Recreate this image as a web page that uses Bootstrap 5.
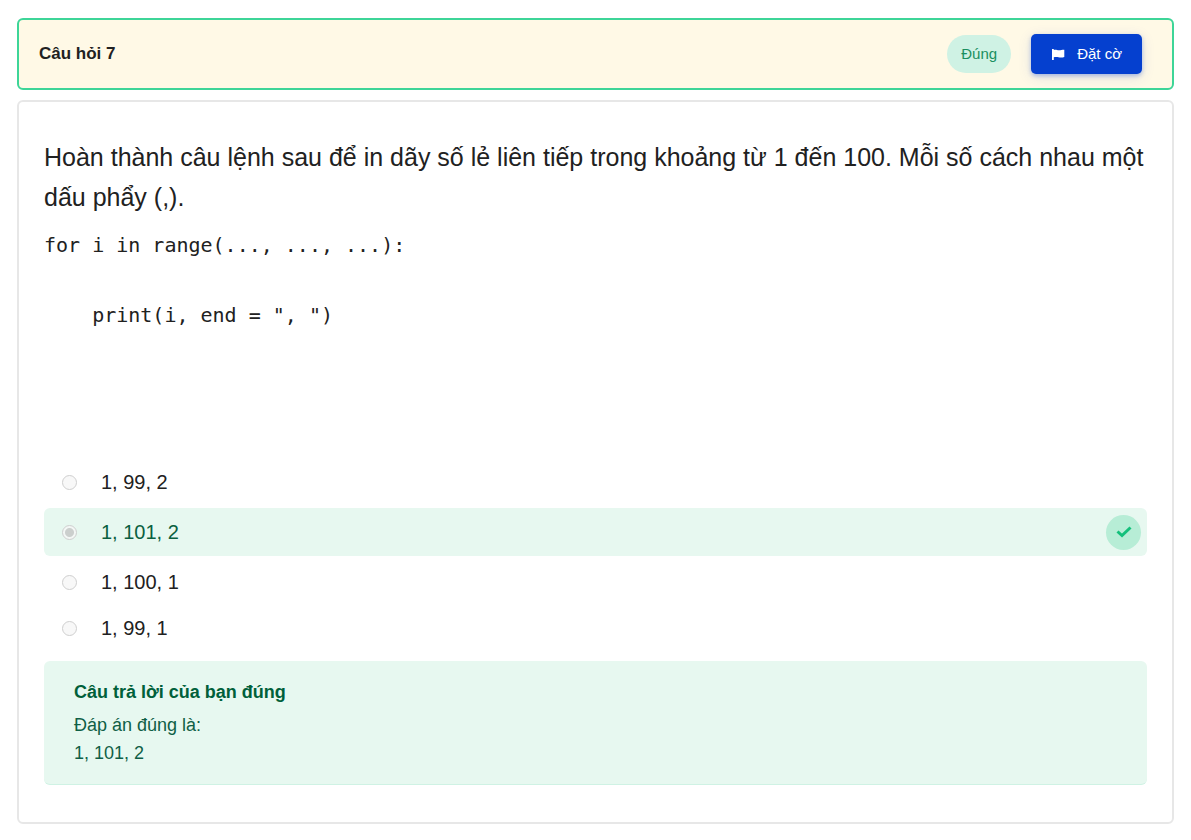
<!DOCTYPE html>
<html lang="vi">
<head>
<meta charset="utf-8">
<meta name="viewport" content="width=device-width, initial-scale=1">
<title>Câu hỏi 7</title>
<link rel="stylesheet" href="https://cdn.jsdelivr.net/npm/bootstrap@5.3.0/dist/css/bootstrap.min.css">
<style>
  body { font-family: "Liberation Sans", Arial, sans-serif; color: #212121; background: #fff; }
  .quiz { padding: 18px 17px 16px; gap: 10px; }
  .question-bar { min-height: 72px; padding: 0 30px 0 20px; border: 2px solid #3dd598; border-radius: 6px; background: #fff9e6; }
  .question-title { font-size: 17px; line-height: 24px; }
  .bar-actions { gap: 20px; }
  .status-pill { padding: 7px 14px; font-size: 15px; line-height: 24px; color: #1a8f5f; background: #cff2e4; }
  .btn-flag { --bs-btn-color: #fff; --bs-btn-bg: #0540cf; --bs-btn-hover-color: #fff; --bs-btn-hover-bg: #0436b0; --bs-btn-border-radius: 5px; height: 40px; padding: 0 20px; border: 0; font-size: 15px; line-height: 24px; gap: 12px; box-shadow: 0 2px 4px rgba(5, 64, 207, .3), 0 3px 14px rgba(5, 64, 207, .12); }
  .question-body { padding: 35px 25px 37px; border: 2px solid #e7e7e7; border-radius: 6px; }
  .question-text { font-size: 25px; line-height: 40px; }
  .code-sample { margin: 11px 0 126px; font-family: "DejaVu Sans Mono", monospace; font-size: 20px; line-height: 35px; color: #212121; }
  .option { min-height: 46px; padding: 0 6px 0 18px; font-size: 20px; line-height: 30px; border-radius: 6px; }
  .option-correct { min-height: 48px; margin: 3px 0; color: #0a6040; background: #e7f8f0; }
  .option label { padding-left: 24px; }
  .option input { appearance: none; width: 15px; height: 15px; margin: 0; border: 1px solid #cfcfcf; border-radius: 50%; background: #f8f8f8; }
  .option input:checked { background: radial-gradient(circle, #cbcfcd 4px, #f3f7f5 5px); }
  .check-badge { width: 35px; height: 35px; background: #b7edd6; }
  .feedback { margin-top: 10px; padding: 17px 30px; border-bottom: 1px solid #cff2e4; border-radius: 6px; background: #e7f8f0; color: #0f5f46; font-size: 18px; line-height: 28px; }
  .feedback h2 { margin-bottom: 5px; font-size: 18px; line-height: 28px; color: #00603a; }
</style>
</head>
<body>
<main class="quiz d-flex flex-column">
  <header class="question-bar d-flex align-items-center justify-content-between">
    <h1 class="question-title fw-bold mb-0">Câu hỏi 7</h1>
    <div class="bar-actions d-flex align-items-center">
      <span class="status-pill rounded-pill">Đúng</span>
      <button type="button" class="btn btn-flag d-inline-flex align-items-center">
        <svg width="14" height="12" viewBox="0 0 14 12" fill="currentColor" aria-hidden="true"><path d="M1 1h1.800v1C5 1.500 6 2.300 8 2.300S11 1.700 13.300 1.800V9C11 9.800 9.500 9.700 7.500 9.200S4 9 2.800 9.300V12H1z"/></svg>
        Đặt cờ
      </button>
    </div>
  </header>

  <section class="question-body">
    <p class="question-text mb-0">Hoàn thành câu lệnh sau để in dãy số lẻ liên tiếp trong khoảng từ 1 đến 100. Mỗi số cách nhau một dấu phẩy (,).</p>
    <pre class="code-sample">for i in range(..., ..., ...):

    print(i, end = ", ")</pre>

    <div role="radiogroup" aria-label="Đáp án">
      <div class="option d-flex align-items-center">
        <input type="radio" name="answer" id="answer-a" disabled>
        <label for="answer-a">1, 99, 2</label>
      </div>
      <div class="option option-correct d-flex align-items-center">
        <input type="radio" name="answer" id="answer-b" checked disabled>
        <label for="answer-b">1, 101, 2</label>
        <span class="check-badge rounded-circle d-flex align-items-center justify-content-center ms-auto">
          <svg width="16" height="12" viewBox="0 0 16 12" fill="none" stroke="#13c07b" stroke-width="3" aria-hidden="true"><path d="M1.500 5.500l4.500 4L14.500 1.500"/></svg>
        </span>
      </div>
      <div class="option d-flex align-items-center">
        <input type="radio" name="answer" id="answer-c" disabled>
        <label for="answer-c">1, 100, 1</label>
      </div>
      <div class="option d-flex align-items-center">
        <input type="radio" name="answer" id="answer-d" disabled>
        <label for="answer-d">1, 99, 1</label>
      </div>
    </div>

    <div class="feedback">
      <h2 class="fw-bold">Câu trả lời của bạn đúng</h2>
      <p class="mb-0">Đáp án đúng là:</p>
      <p class="mb-0">1, 101, 2</p>
    </div>
  </section>
</main>
<script src="https://cdn.jsdelivr.net/npm/bootstrap@5.3.0/dist/js/bootstrap.bundle.min.js"></script>
</body>
</html>
